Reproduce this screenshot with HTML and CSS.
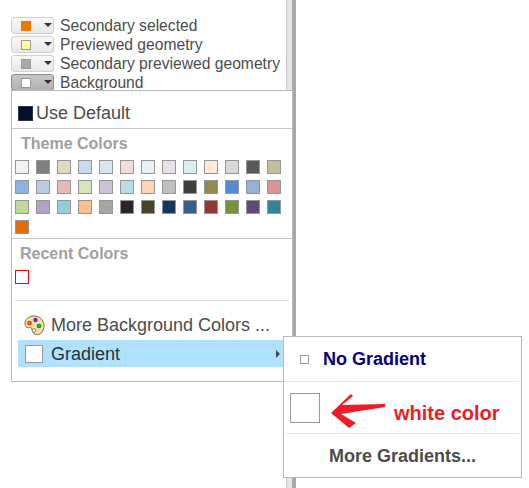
FILE: index.html
```html
<!DOCTYPE html>
<html lang="en">
<head>
<meta charset="utf-8">
<title>Colors</title>
<link rel="stylesheet" href="styles.css">
</head>
<body>
<div class="page">
  <aside class="side">
    <div class="rows">
      <div class="row"><span class="picker"><i class="chip" style="background:#f07800"></i><b class="caret"></b></span><span>Secondary selected</span></div>
      <div class="row"><span class="picker"><i class="chip" style="background:#ffffa0"></i><b class="caret"></b></span><span>Previewed geometry</span></div>
      <div class="row"><span class="picker"><i class="chip" style="background:#aaaaaa"></i><b class="caret"></b></span><span>Secondary previewed geometry</span></div>
      <div class="row"><span class="picker active"><i class="chip" style="background:#ffffff"></i><b class="caret"></b></span><span>Background</span></div>
    </div>
    <div class="splitter"></div>
  </aside>
  <main class="canvas"></main>

  <div class="menu">
    <div class="default"><i class="default-chip"></i>Use Default</div>
    <div class="head head-first">Theme Colors</div>
    <div class="grid">
      <i style="background:#f2f2f2"></i><i style="background:#7f7f7f"></i><i style="background:#ddd9c3"></i><i style="background:#c6d9f0"></i><i style="background:#dbe5f1"></i><i style="background:#f2dcdb"></i><i style="background:#e9f0fa"></i><i style="background:#e5e0ec"></i><i style="background:#dbeef3"></i><i style="background:#fdeada"></i><i style="background:#d8d8d8"></i><i style="background:#595959"></i><i style="background:#c4bd97"></i>
      <i style="background:#8db3e2"></i><i style="background:#b8cce4"></i><i style="background:#e5b9b7"></i><i style="background:#d7e3bc"></i><i style="background:#ccc1d9"></i><i style="background:#b7dde8"></i><i style="background:#fbd5b5"></i><i style="background:#bfbfbf"></i><i style="background:#3f3f3f"></i><i style="background:#938953"></i><i style="background:#548dd4"></i><i style="background:#95b3d7"></i><i style="background:#d99694"></i>
      <i style="background:#c3d69b"></i><i style="background:#b2a2c7"></i><i style="background:#92cddc"></i><i style="background:#fac08f"></i><i style="background:#a5a5a5"></i><i style="background:#262626"></i><i style="background:#494429"></i><i style="background:#17365d"></i><i style="background:#366092"></i><i style="background:#953734"></i><i style="background:#76923c"></i><i style="background:#5f497a"></i><i style="background:#31859b"></i>
      <i style="background:#e36c09"></i>
    </div>
    <div class="head head-recent">Recent Colors</div>
    <div class="grid recent"><i class="red"></i></div>
    <div class="rule"></div>
    <div class="more">
      <svg class="palette" width="21" height="21" viewBox="0 0 21 21">
        <path d="M10 1C5 1 1 4.300 1 8.500c0 2.600 1.500 4.200 3.500 4.200 1.600 0 2.200-.5 3 .2.700.7.300 1.600.700 2.800.6 1.900 2.300 4 5 4 3.800 0 6.800-4.200 6.800-9C20 5 15.600 1 10 1z" fill="#f2e2a4" stroke="#8a6a38" stroke-width="1"/>
        <circle cx="5.500" cy="8" r="2.300" fill="#f03000"/><circle cx="5.500" cy="8" r="1" fill="#ffa000"/>
        <circle cx="11.500" cy="5" r="2.200" fill="#7a20c8"/>
        <circle cx="15" cy="11" r="2.300" fill="#109020"/><circle cx="15" cy="11" r="1" fill="#30c040"/>
        <circle cx="10" cy="15.500" r="1.800" fill="#fff" stroke="#8a6a38" stroke-width=".8"/>
      </svg>
      <span>More Background Colors ...</span>
    </div>
    <div class="gradient"><i class="grad-chip"></i><span class="grad-label">Gradient</span><b class="arrow"></b></div>
  </div>

  <div class="submenu">
    <div class="no-grad"><i class="mini"></i><span>No Gradient</span></div>
    <div class="sample">
      <i class="big"></i>
      <svg class="red-arrow" width="56" height="36" viewBox="0 0 56 36">
        <path d="M0 20 L20 1 L22 3 L11 12 L54 11 L54 14 L10 21 L25 30 L18 35 Z" fill="#ee1c25"/>
      </svg>
      <span class="note">white color</span>
    </div>
    <div class="more-grad">More Gradients...</div>
  </div>
</div>
</body>
</html>
```
FILE: styles.css
```css
html, body { margin: 0; padding: 0; height: 100%; }
body { background: #fff; overflow: hidden; font-family: "Liberation Sans", Arial, sans-serif; color: #4c4c4c; }
.page { position: relative; display: flex; width: 529px; height: 488px; overflow: hidden; }
.side { display: flex; flex: 0 0 296px; height: 488px; }
.rows { flex: 0 0 287px; box-sizing: border-box; padding: 16px 0 0 11px; border-right: 1px solid #c8c8c8; }
.splitter { flex: 1; background: #e6e6e6; border-right: 4px solid #a8a8a8; }
.canvas { flex: 1; background: #fff; }
.row { display: flex; align-items: center; height: 19px; font-size: 15.65px; gap: 6px; white-space: nowrap; }
.picker { position: relative; display: flex; align-items: center; box-sizing: border-box; width: 43px; height: 17px; border: 1px solid #d0d0d0; border-radius: 3px; background: linear-gradient(#f8f8f8, #e8e8e8); }
.picker.active { border-color: #8c8c8c; background: linear-gradient(#c8c8c8, #b0b0b0); }
.chip { display: block; box-sizing: border-box; width: 10px; height: 10px; margin-left: 9px; border: 1px solid #999; }
.row:first-child .chip { border-color: #f07800; }
.caret { position: absolute; left: 32px; top: 5px; border-style: solid; border-width: 4px 4px 0; border-color: #333 transparent transparent; }
.menu { position: absolute; left: 11px; top: 90px; box-sizing: border-box; width: 282px; height: 292px; background: #fff; border: 1px solid #b8b8b8; }
.default { display: flex; align-items: center; height: 38px; padding: 7px 0 0 6px; box-sizing: border-box; font-size: 18px; border-bottom: 1px solid #c8c8c8; gap: 3px; }
.default-chip { flex: none; width: 15px; height: 15px; background: #03102e; border: 1px solid #2a3348; box-sizing: border-box; }
.head { padding-left: 9px; font-size: 16px; font-weight: bold; color: #a0a0a0; line-height: 16px; white-space: nowrap; }
.head-first { margin-top: 7px; }
.grid { display: grid; grid-template-columns: repeat(13, 14px); gap: 6px 7px; align-content: start; box-sizing: border-box; height: 79px; margin-top: 8px; padding-left: 3px; border-bottom: 1px solid #c8c8c8; }
.grid i { display: block; box-sizing: border-box; width: 14px; height: 14px; border: 1px solid #959595; }
.grid i.red { border-color: #f00; background: #fff; }
.head-recent { margin-top: 7px; padding-left: 8px; }
.grid.recent { border-bottom: 0; height: 14px; margin-top: 8px; }
.rule { height: 1px; background: #d8d8d8; margin: 16px 3px 0 3px; }
.more { display: flex; align-items: center; height: 24px; margin-top: 12px; padding-left: 12px; gap: 6px; font-size: 18px; white-space: nowrap; }
.palette { flex: none; }
.gradient { position: relative; display: flex; align-items: center; box-sizing: border-box; height: 27px; margin: 3px 0 0 6px; width: 272px; padding-left: 7px; background: #b0e2ff; color: #26323a; font-size: 18px; gap: 8px; }
.grad-label { padding-top: 2px; }
.grad-chip { flex: none; width: 18px; height: 18px; box-sizing: border-box; background: #fff; border: 1px solid #999; }
.arrow { position: absolute; right: 10px; top: 10px; border-style: solid; border-width: 4px 0 4px 4px; border-color: transparent transparent transparent #444; }
.submenu { position: absolute; left: 283px; top: 336px; box-sizing: border-box; width: 239px; height: 142px; background: #fff; border: 1px solid #b8b8b8; }
.no-grad { display: flex; align-items: center; height: 45px; margin: 0 2px; padding-left: 14px; box-sizing: border-box; border-bottom: 1px solid #e6e6e6; gap: 14px; color: #00007f; font-size: 18px; font-weight: bold; white-space: nowrap; }
.mini { flex: none; width: 9px; height: 9px; box-sizing: border-box; border: 1px solid #999; background: #fff; }
.sample { display: flex; align-items: center; height: 52px; margin: 0 2px; box-sizing: border-box; padding-left: 4px; border-bottom: 1px solid #e6e6e6; }
.big { flex: none; width: 30px; height: 30px; box-sizing: border-box; border: 1px solid #999; background: #fff; }
.red-arrow { margin: 7px 0 0 11px; flex: none; }
.note { margin: 12px 0 0 7px; color: #ee1c25; font-size: 20px; font-weight: bold; white-space: nowrap; }
.more-grad { text-align: center; padding-top: 12px; font-size: 18px; font-weight: bold; color: #4c4c4c; white-space: nowrap; }
```
